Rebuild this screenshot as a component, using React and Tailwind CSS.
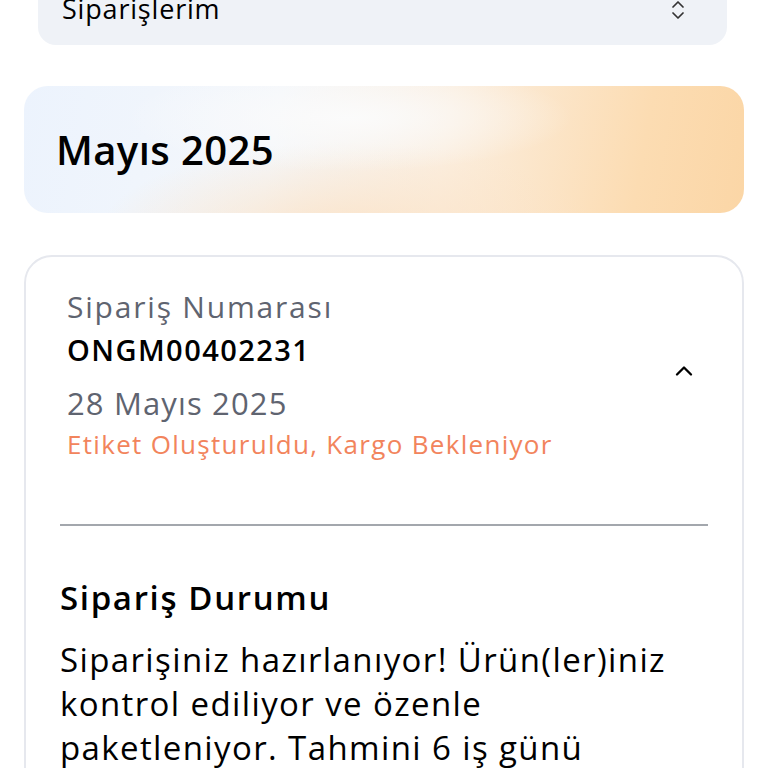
import { ChevronsUpDown, ChevronUp } from "lucide-react";

function OrderCard() {
  return (
    <div className="mx-6 mt-[42px] rounded-[28px] border-2 border-[#e6e8ee] bg-white">
      {/* üst kısım */}
      <div className="flex items-center pl-[41px] pr-[44px] pt-[28px] pb-[62px]">
        <div className="flex-1">
          <p className="text-[30px] leading-[44px] tracking-[0.06em] text-[#5f6470]">Sipariş Numarası</p>
          <p className="text-[29px] leading-[44px] tracking-[0.05em] font-semibold text-black -mt-[1px]">ONGM00402231</p>
          <p className="mt-[9px] text-[31px] leading-[44px] tracking-[0.037em] text-[#5f6470]">28 Mayıs 2025</p>
          <p className="text-[26px] leading-[36px] tracking-[0.05em] font-medium text-[#f2845c] mt-[1px]">
            Etiket Oluşturuldu, Kargo Bekleniyor
          </p>
        </div>
        <ChevronUp className="w-7 h-7 text-black -mt-[6px]" strokeWidth={2} />
      </div>

      <div className="mx-[34px] h-[2px] bg-[#a3a7ad]" />

      {/* sipariş durumu */}
      <div className="px-[34px] pt-[50px] pb-10">
        <h3 className="text-[33px] leading-[44px] tracking-[0.05em] font-semibold text-black">Sipariş Durumu</h3>
        <p className="mt-[18px] text-[33px] leading-[44px] tracking-[0.042em] text-black">
          Siparişiniz hazırlanıyor! Ürün(ler)iniz
          <br />
          kontrol ediliyor ve özenle
          <br />
          paketleniyor. Tahmini 6 iş günü
          <br />
          içinde kargoya verilecektir.
        </p>
      </div>
    </div>
  );
}

export default function App() {
  return (
    <div className="min-h-screen bg-white font-['Open_Sans',sans-serif] overflow-hidden">
      {/* sipariş seçici */}
      <div className="ml-[38px] mr-[41px] -mt-[26px] h-[71px] rounded-[18px] bg-[#eff2f7] flex items-center justify-between pl-6 pr-[37px]">
        <span className="text-[27px] tracking-[0.03em] text-black">Siparişlerim</span>
        <ChevronsUpDown className="w-6 h-6 text-[#333]" strokeWidth={1.75} />
      </div>

      {/* ay başlığı */}
      <div className="mx-6 mt-[41px] h-[127px] rounded-[24px] flex items-center pl-8 bg-[radial-gradient(ellipse_at_45%_25%,#fbfbfb_0%,rgba(251,251,251,0)_40%),radial-gradient(ellipse_at_45%_120%,#fbe3c8_0%,rgba(251,227,200,0)_45%),linear-gradient(100deg,#ecf3fd_0%,#f4f7fb_35%,#fbeedf_58%,#fcdcb2_85%,#fbd6a6_100%)]">
        <h2 className="text-[40px] font-semibold tracking-[0.01em] text-black">Mayıs 2025</h2>
      </div>

      <OrderCard />
    </div>
  );
}
